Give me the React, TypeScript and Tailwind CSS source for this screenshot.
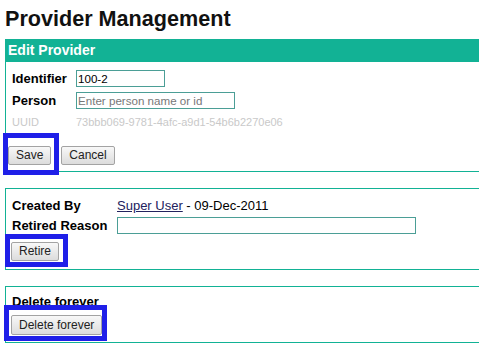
const font = { fontFamily: '"Liberation Sans", Arial, sans-serif' };

const Btn = ({ label, className = '' }: { label: string; className?: string }) => (
  <button
    className={`h-[19px] rounded-[2px] border border-[#a3a3a3] bg-gradient-to-b from-[#f8f8f8] to-[#dcdcdc] px-[7px] text-[12px] leading-[17px] text-[#222] ${className}`}
  >
    {label}
  </button>
);

const Highlight = ({ className }: { className: string }) => (
  <div className={`pointer-events-none absolute border-[5px] border-[#1f1fe8] ${className}`} />
);

export default function App() {
  return (
    <div className="relative h-[350px] w-[479px] overflow-hidden bg-white text-black" style={font}>
      <div className="pl-[5px]">
        <h1 className="pt-[6px] text-[21.6px] leading-[26px] font-bold text-[#111]">Provider Management</h1>

        {/* edit box */}
        <div className="mt-[7px] w-[520px] border-y border-l border-[#12b295]">
          <div className="h-[22px] bg-[#12b295] pl-[2px] text-[14px] leading-[21px] font-bold text-white">Edit Provider</div>
          <div className="pt-[8px] pb-[6px]">
            <div className="flex h-[17px] items-center">
              <span className="w-[70px] pl-[6px] text-[13px] leading-[17px] font-bold">Identifier</span>
              <div className="h-[17px] w-[89px] border border-[#4b9e96] pl-[1px] text-[11.6px] leading-[15px]">100-2</div>
            </div>
            <div className="mt-[5px] flex h-[17px] items-center">
              <span className="w-[70px] pl-[6px] text-[13px] leading-[17px] font-bold">Person</span>
              <div className="h-[17px] w-[159px] border border-[#4b9e96] pl-[1px] text-[11.6px] leading-[15px] text-[#777]">
                Enter person name or id
              </div>
            </div>
            <div className="mt-[5px] flex h-[17px] items-center text-[11px] leading-[17px] text-[#c9c9c9]">
              <span className="w-[70px] pl-[6px]">UUID</span>
              <span>73bbb069-9781-4afc-a9d1-54b6b2270e06</span>
            </div>
            <div className="mt-[15px] flex gap-[10px] pl-[2px]">
              <Btn label="Save" className="h-[18px]" />
              <Btn label="Cancel" className="h-[18px]" />
            </div>
          </div>
        </div>

        {/* retire box */}
        <div className="mt-[16px] w-[520px] border-y border-l border-[#12b295] pt-[8px] pb-[8px]">
          <div className="flex h-[17px] items-center text-[13px] leading-[17px]">
            <span className="w-[111px] pl-[6px] font-bold">Created By</span>
            <span>
              <span className="text-[#22225e] underline">Super User</span> - 09-Dec-2011
            </span>
          </div>
          <div className="mt-[3px] flex h-[17px] items-center">
            <span className="w-[111px] pl-[6px] text-[13px] leading-[17px] font-bold">Retired Reason</span>
            <div className="h-[17px] w-[299px] border border-[#4b9e96]" />
          </div>
          <div className="mt-[8px] flex pl-[5px]">
            <Btn label="Retire" className="h-[18px]" />
          </div>
        </div>

        {/* delete box */}
        <div className="mt-[16px] w-[520px] border-y border-l border-[#12b295] pt-[6px] pb-[7px]">
          <div className="h-[17px] pl-[6px] text-[13px] leading-[17px] font-bold">Delete forever</div>
          <div className="mt-[5px] flex pl-[5px]">
            <Btn label="Delete forever" className="h-[20px]" />
          </div>
        </div>
      </div>

      <Highlight className="top-[133px] left-[3px] h-[42px] w-[56px]" />
      <Highlight className="top-[234px] left-[5px] h-[33px] w-[63px]" />
      <Highlight className="top-[305px] left-[4px] h-[36px] w-[103px]" />
    </div>
  );
}
